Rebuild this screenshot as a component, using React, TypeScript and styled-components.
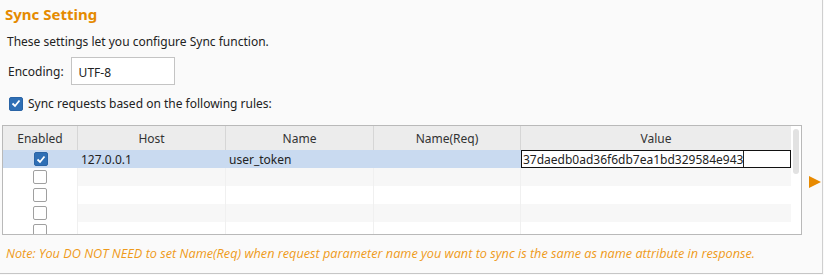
import React from "react";
import styled, { createGlobalStyle } from "styled-components";

const GlobalStyle = createGlobalStyle`
  body {
    margin: 0;
    background: #fafafa;
    font-family: "Noto Sans", "Open Sans", sans-serif;
    color: #222;
  }
`;

const Panel = styled.div`
  box-sizing: border-box;
  width: 823px;
  height: 274px;
  border-right: 1px solid #cfcfcf;
  border-bottom: 1px solid #c6c6c6;
  background: #fafafa;
  padding: 3px 0 0 2px;
  display: flex;
  flex-direction: column;
`;

const Title = styled.h2`
  margin: 0 0 0 3px;
  font-size: 15px;
  font-weight: 700;
  color: #e58a00;
  line-height: 22px;
`;

const Description = styled.p`
  margin: 9px 0 0 5px;
  font-size: 12px;
  line-height: 16px;
`;

const FieldRow = styled.div`
  display: flex;
  align-items: center;
  gap: 7px;
  margin: 7px 0 0 6px;
  font-size: 12px;
`;

const TextInput = styled.div`
  box-sizing: border-box;
  width: 104px;
  height: 28px;
  border: 1px solid #c4c4c4;
  background: #fff;
  font-size: 12px;
  padding: 6px 0 0 7px;
`;

const CheckRow = styled.label`
  display: flex;
  align-items: center;
  gap: 5px;
  margin: 10px 0 0 7px;
  font-size: 12px;
`;

const Box = styled.span<{ $checked?: boolean }>`
  box-sizing: border-box;
  width: 14px;
  height: 14px;
  border-radius: 2px;
  display: inline-flex;
  align-items: center;
  justify-content: center;
  background: ${(p) => (p.$checked ? "#2f6fb5" : "#fff")};
  border: 1px solid ${(p) => (p.$checked ? "#2a64a6" : "#a0a0a0")};
`;

const TableArea = styled.div`
  display: flex;
  align-items: flex-start;
  margin-top: 13px;
`;

const TableFrame = styled.div`
  display: flex;
  width: 798px;
  height: 108px;
  overflow: hidden;
  border: 1px solid #b9b9b9;
  background: #fff;
`;

const Grid = styled.div`
  display: grid;
  grid-template-columns: 75px 148px 148px 147px 270px;
  grid-auto-rows: 18px;
  grid-template-rows: 24px;
  width: 788px;
  font-size: 12px;
`;

const HeadCell = styled.div<{ $last?: boolean }>`
  background: #ececec;
  border-right: ${(p) => (p.$last ? "none" : "1px solid #d6d6d6")};
  display: flex;
  align-items: center;
  justify-content: center;
  color: #333;
`;

const Cell = styled.div<{ $tone: "sel" | "alt" | "plain" | "white"; $last?: boolean }>`
  box-sizing: border-box;
  background: ${(p) =>
    p.$tone === "sel" ? "#c9daf0" : p.$tone === "alt" ? "#f7f7f7" : "#fff"};
  border-right: ${(p) =>
    p.$last ? "none" : p.$tone === "sel" ? "none" : "1px solid #f0f0f0"};
  display: flex;
  align-items: center;
  padding-left: 3px;
  white-space: nowrap;
  overflow: hidden;
`;

const CheckCell = styled(Cell)`
  justify-content: center;
  padding-left: 0;
`;

const Editor = styled.div`
  box-sizing: border-box;
  height: 18px;
  border: 1px solid #111;
  background: #fff;
  display: flex;
  align-items: center;
  padding-left: 1px;
  font-size: 12px;
`;

const Caret = styled.span`
  align-self: stretch;
  width: 1px;
  background: #222;
`;

const Scrollbar = styled.div`
  width: 10px;
  background: #fff;
  display: flex;
  justify-content: center;
  padding-top: 3px;
`;

const Thumb = styled.div`
  width: 6px;
  height: 45px;
  border-radius: 3px;
  background: #e2e2e2;
`;

const Arrow = styled.span`
  margin: 51px 0 0 7px;
  width: 0;
  height: 0;
  border-top: 6px solid transparent;
  border-bottom: 6px solid transparent;
  border-left: 12px solid #e88a00;
`;

const Note = styled.p`
  margin: 9px 0 0 4px;
  font-family: "Open Sans", "Noto Sans", sans-serif;
  font-style: italic;
  font-size: 12.7px;
  color: #ef9a1a;
  white-space: nowrap;
`;

const Tick = () => (
  <svg width="10" height="9" viewBox="0 0 10 9">
    <path d="M1.5 4.5 L4 7 L8.5 1.5" fill="none" stroke="#fff" strokeWidth="1.8" />
  </svg>
);

const rows = [
  { on: true, host: "127.0.0.1", name: "user_token", req: "", value: "37daedb0ad36f6db7ea1bd329584e943" },
  { on: false, host: "", name: "", req: "", value: "" },
  { on: false, host: "", name: "", req: "", value: "" },
  { on: false, host: "", name: "", req: "", value: "" },
  { on: false, host: "", name: "", req: "", value: "" },
];

const App: React.FC = () => {
  return (
    <>
      <GlobalStyle />
      <Panel>
        <Title>Sync Setting</Title>
        <Description>These settings let you configure Sync function.</Description>
        <FieldRow>
          Encoding:
          <TextInput>UTF-8</TextInput>
        </FieldRow>
        <CheckRow>
          <Box $checked>
            <Tick />
          </Box>
          Sync requests based on the following rules:
        </CheckRow>
        <TableArea>
          <TableFrame>
            <Grid>
              <HeadCell>Enabled</HeadCell>
              <HeadCell>Host</HeadCell>
              <HeadCell>Name</HeadCell>
              <HeadCell>Name(Req)</HeadCell>
              <HeadCell $last>Value</HeadCell>
              {rows.map((r, i) => {
                const tone = i === 0 ? "sel" : i % 2 === 1 ? "alt" : "plain";
                return (
                  <React.Fragment key={i}>
                    <CheckCell $tone={i === 0 ? "sel" : "white"}>
                      <Box $checked={r.on}>{r.on && <Tick />}</Box>
                    </CheckCell>
                    <Cell $tone={tone}>{r.host}</Cell>
                    <Cell $tone={tone}>{r.name}</Cell>
                    <Cell $tone={tone}>{r.req}</Cell>
                    {i === 0 ? (
                      <Editor>
                        {r.value}
                        <Caret />
                      </Editor>
                    ) : (
                      <Cell $tone={tone} $last>
                        {r.value}
                      </Cell>
                    )}
                  </React.Fragment>
                );
              })}
            </Grid>
            <Scrollbar>
              <Thumb />
            </Scrollbar>
          </TableFrame>
          <Arrow />
        </TableArea>
        <Note>
          Note: You DO NOT NEED to set Name(Req) when request parameter name you want to sync is the
          same as name attribute in response.
        </Note>
      </Panel>
    </>
  );
};

export default App;
